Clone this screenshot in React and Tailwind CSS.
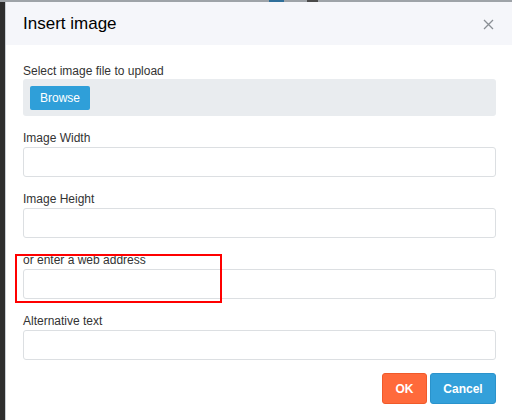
import React from 'react';

const font = { fontFamily: '"Liberation Sans", Arial, sans-serif' };

function Field({ label, children }) {
  return (
    <div className="relative mt-[15px]">
      <div className="text-[12px] leading-[14px] text-[#333] mb-[2px]">{label}</div>
      <input
        type="text"
        className="block w-full h-[30px] bg-white border border-[#dcdfe2] rounded-[3px] px-2 text-[12px] outline-none"
      />
      {children}
    </div>
  );
}

export default function App() {
  return (
    <div className="w-[512px] h-[420px] overflow-hidden bg-[#2e2e2e] flex flex-col" style={font}>
      {/* page behind the dialog */}
      <div className="h-[2px] shrink-0 bg-[#9ea3a8] flex">
        <div className="ml-[269px] w-[15px] bg-[#2f6f9a]" />
        <div className="ml-[23px] w-[11px] bg-[#4a4a4a]" />
      </div>
      <div className="flex flex-1 min-h-0">
        <div className="w-[5px] shrink-0 bg-[#2e2e2e]" />
        <div className="w-[508px] shrink-0 bg-white border-l border-[#c9ced4] flex flex-col">
          <div className="h-[43px] shrink-0 bg-[#f5f6fa] px-[17px] flex items-center justify-between">
            <div className="text-[17px] leading-[20px] text-black pt-[1px]">Insert image</div>
            <svg width="11" height="11" viewBox="0 0 11 11" className="mr-[2px] mt-[1px]">
              <path d="M1 1 L10 10 M10 1 L1 10" stroke="#8a8f94" strokeWidth="1.3" fill="none" />
            </svg>
          </div>

          <div className="px-[17px] pt-[19px]">
            <div className="text-[12px] leading-[14px] text-[#333] mb-[1px]">Select image file to upload</div>
            <div className="h-[37px] bg-[#e9ecef] rounded-[3px] flex items-center pl-[7px]">
              <button className="h-[24px] w-[60px] bg-[#2f9fd9] rounded-[2px] text-white text-[12px] leading-none">
                Browse
              </button>
            </div>

            <Field label="Image Width" />
            <Field label="Image Height" />
            <Field label="or enter a web address">
              <div className="absolute top-[1px] left-[-8px] w-[207px] h-[49px] border-2 border-[#ff0000] pointer-events-none" />
            </Field>
            <Field label="Alternative text" />

            <div className="flex justify-end gap-[3px] mt-[13px]">
              <button className="h-[31px] w-[45px] bg-[#ff6a3b] border border-[#f05a2a] rounded-[3px] text-white text-[12px] font-bold">
                OK
              </button>
              <button className="h-[31px] w-[66px] bg-[#33a0da] border border-[#2a93cc] rounded-[3px] text-white text-[12px] font-bold">
                Cancel
              </button>
            </div>
          </div>
        </div>
      </div>
    </div>
  );
}
